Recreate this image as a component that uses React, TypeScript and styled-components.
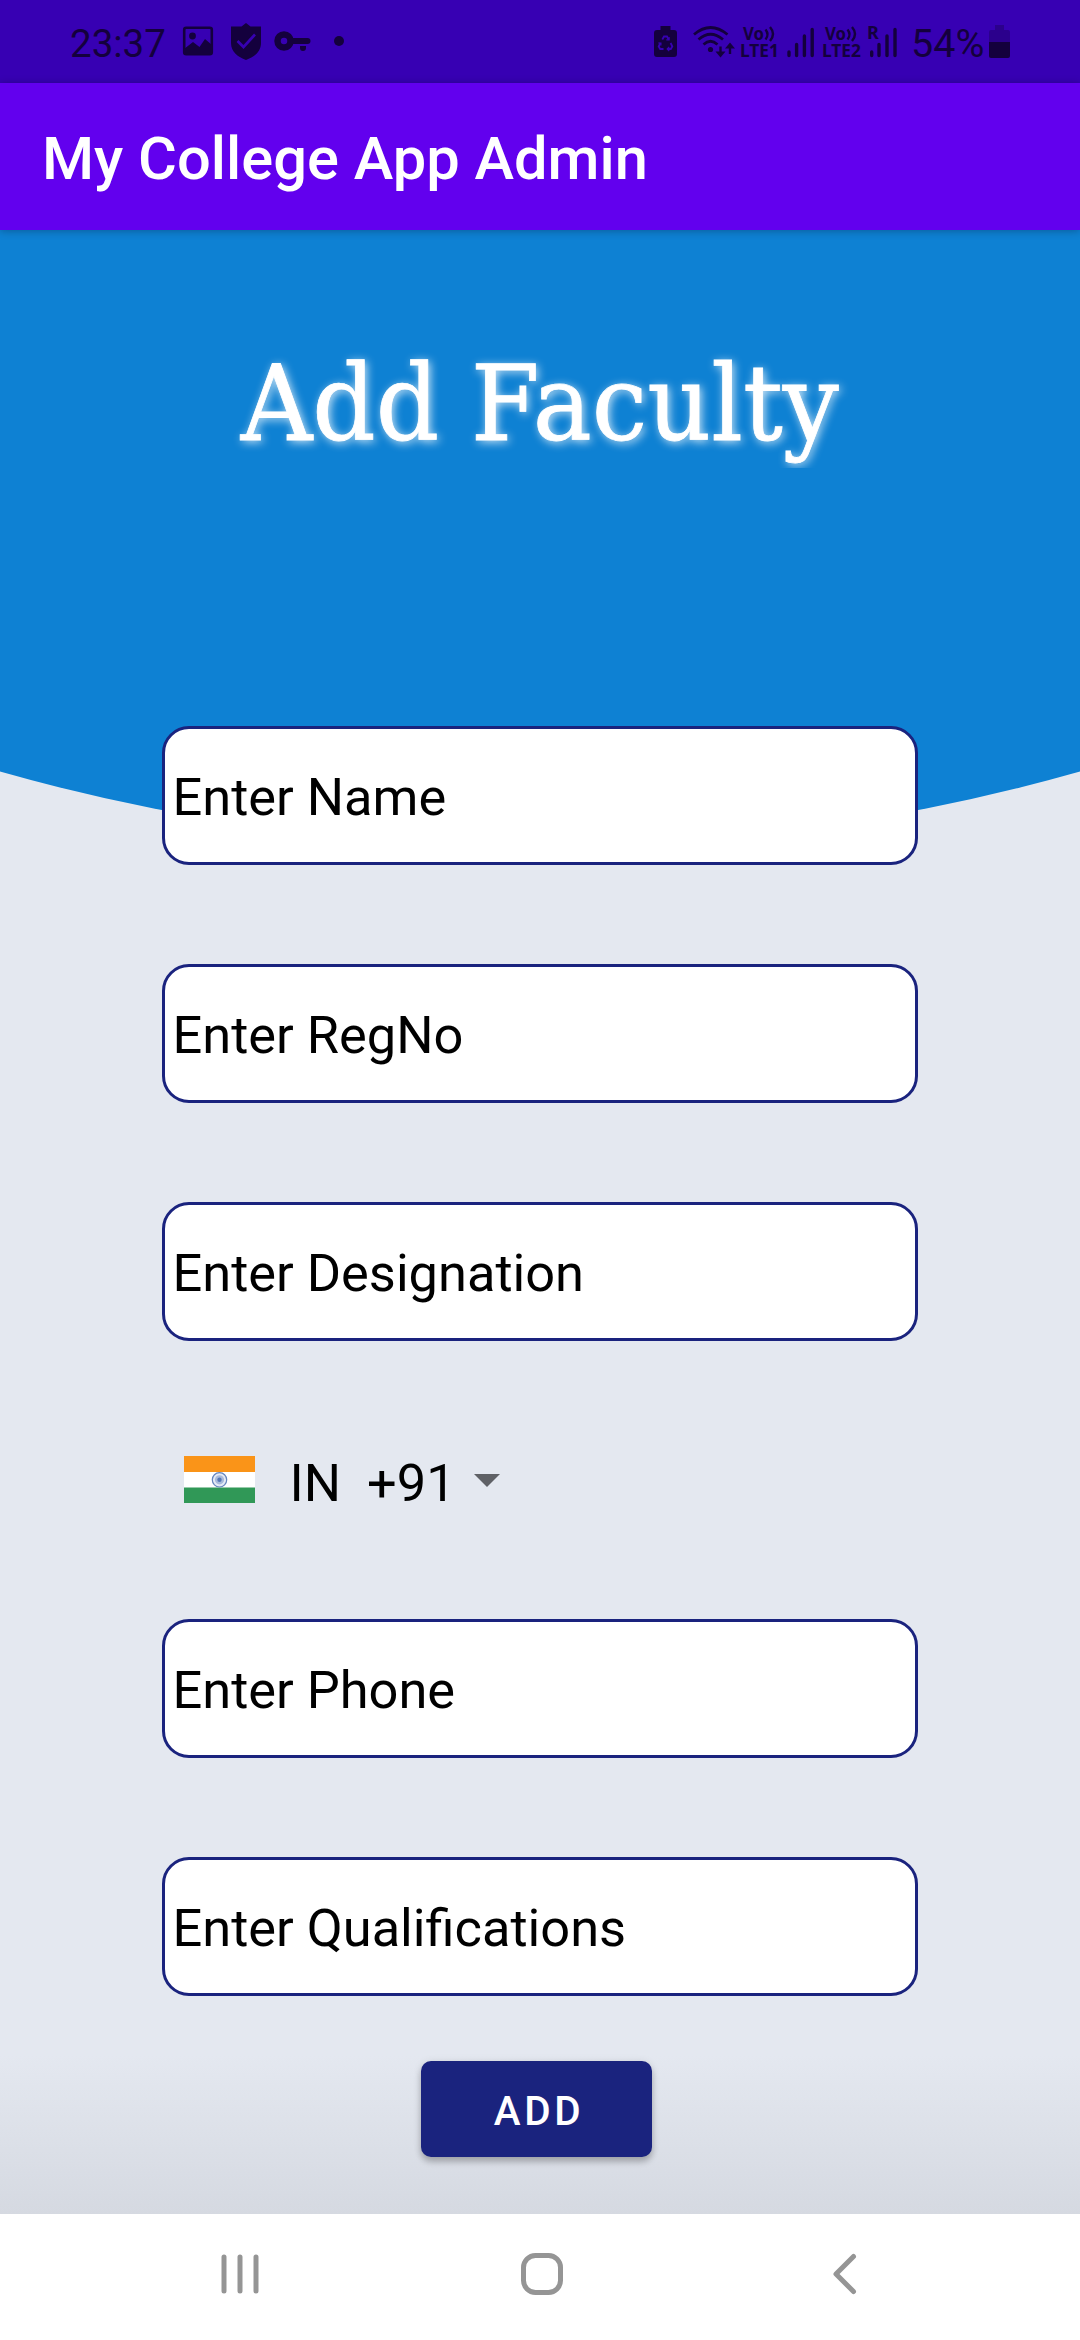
import React from 'react';
import styled, { createGlobalStyle } from 'styled-components';

const INK = '#14003d';

const GlobalStyle = createGlobalStyle`
  *, *::before, *::after { box-sizing: border-box; }
  html, body { margin: 0; padding: 0; }
  body { font-family: Roboto, 'Liberation Sans', sans-serif; }
`;

const Screen = styled.div`
  width: 1080px;
  height: 2340px;
  display: flex;
  flex-direction: column;
  overflow: hidden;
  background: #e4e8f0;
`;

const StatusBar = styled.header`
  height: 83px;
  flex: none;
  display: flex;
  justify-content: space-between;
  padding: 0 70px;
  background: #3700b3;
  color: ${INK};
`;

const StatusGroup = styled.div`
  display: flex;
  align-items: center;
  height: 83px;
`;

const StatusText = styled.span<{ $width: number; $size: number; $indent?: number }>`
  width: ${p => p.$width}px;
  padding: 4px 0 0 ${p => p.$indent ?? 0}px;
  font-size: ${p => p.$size}px;
  line-height: 46px;
  white-space: nowrap;
`;

const StatusIcon = styled.svg<{ $gap?: number }>`
  display: block;
  flex: none;
  height: 83px;
  margin-left: ${p => p.$gap ?? 0}px;
  overflow: visible;
`;

const AppBar = styled.div`
  height: 147px;
  flex: none;
  display: flex;
  align-items: center;
  padding: 4px 42px 0;
  background: #6200ee;
  box-shadow: 0 1px 8px rgba(0, 0, 0, 0.28);
  position: relative;
  z-index: 1;
`;

const AppTitle = styled.h1`
  margin: 0;
  color: #fff;
  font-size: 59.6px;
  font-weight: 500;
  line-height: 70px;
  white-space: nowrap;
`;

const Content = styled.main`
  position: relative;
  height: 1984px;
  flex: none;
  display: flex;
  flex-direction: column;
  background: linear-gradient(to bottom, #e4e8f0 0, #e4e8f0 1825px, #d5d9e1 1984px);
`;

const Backdrop = styled.div`
  position: absolute;
  inset: 0;
  background: #0e81d3;
  clip-path: circle(1980px at 540px -1363.5px);
`;

const Heading = styled.h2`
  position: relative;
  margin: 102px 0 0;
  height: 136px;
  overflow: hidden;
  text-align: center;
  color: #fff;
  font-family: 'DejaVu Serif', serif;
  font-weight: 400;
  font-size: 104px;
  line-height: 144px;
  -webkit-text-stroke: 0.8px #fff;
  text-shadow: 2px 2px 10px rgba(255, 255, 255, 0.85);
  white-space: nowrap;
`;

const HeadingText = styled.span`
  display: inline-block;
  transform: scaleX(0.953);
`;

const Form = styled.form`
  position: relative;
  display: flex;
  flex-direction: column;
  width: 756px;
  margin: 258px 0 0 162px;
`;

const Field = styled.input`
  width: 756px;
  height: 139px;
  margin: 0 0 99px;
  padding: 3px 7.5px 0;
  border: 3px solid #1a237e;
  border-radius: 27px;
  outline: none;
  background: #fff;
  font-family: Roboto, 'Liberation Sans', sans-serif;
  font-size: 52.35px;
  color: #000;
  &::placeholder { color: #000; opacity: 1; }
`;

const CountryPicker = styled.div`
  display: flex;
  align-items: center;
  height: 80px;
  margin: 0 0 99px;
  padding-left: 22px;
`;

const Flag = styled.svg`
  display: block;
  margin-bottom: 1px;
`;

const CountryCode = styled.span`
  margin: 5px 0 0 34.5px;
  width: 184.5px;
  font-size: 52.35px;
  line-height: 60px;
  white-space: pre;
`;

const AddButton = styled.button`
  width: 231px;
  height: 96px;
  margin: -34px 0 0 259px;
  padding: 4px 0 0 5px;
  border: 0;
  border-radius: 10px;
  background: #1a237e;
  color: #fff;
  font-family: Roboto, 'Liberation Sans', sans-serif;
  font-size: 40.4px;
  font-weight: 500;
  letter-spacing: 3.6px;
  box-shadow: 0 5px 6px rgba(0, 0, 0, 0.22), 0 1px 8px rgba(0, 0, 0, 0.1);
`;

const NavBar = styled.nav`
  flex: 1;
  display: flex;
  justify-content: space-between;
  align-items: center;
  padding: 0 220px 6px;
  background: #fff;
`;

const NavIcon = styled.svg<{ $nudge?: number }>`
  display: block;
  margin-right: ${p => p.$nudge ?? 0}px;
  fill: none;
  stroke: #959595;
  stroke-width: 5;
  stroke-linecap: round;
  stroke-linejoin: round;
`;

const Carrier = ({ digit, gap }: { digit: string; gap: number }) => (
  <StatusIcon $gap={gap} width="40" height="83" viewBox="0 0 40 83" fill={INK}>
    <g fontFamily="Noto Sans, Open Sans, sans-serif" fontWeight="700">
      <text x="3" y="40" fontSize="17.5" textLength="21" lengthAdjust="spacingAndGlyphs">Vo</text>
      <text x="0" y="57" fontSize="17.5" textLength="39" lengthAdjust="spacingAndGlyphs">{'LTE' + digit}</text>
    </g>
    <path d="M25.5 29.5q4 5 0 10M30 27q6 7 0 14" fill="none" stroke={INK} strokeWidth="2.4" />
  </StatusIcon>
);

const Bars = ({ roaming, gap }: { roaming?: boolean; gap: number }) => (
  <StatusIcon $gap={gap} width="28" height="83" viewBox="0 0 28 83" fill={INK}>
    <path
      d={roaming ? 'M3.7 52v3.5M11 44.500v11M19 36v19.500M27 29.500v26' : 'M2 52v3.500M9.600 44.500v11M17.400 36v19.500M25.200 29.500v26'}
      stroke={INK} strokeWidth="3.4" strokeLinecap="round"
    />
    {roaming && <text x="-1" y="39" fontFamily="Noto Sans, sans-serif" fontWeight="700" fontSize="18">R</text>}
  </StatusIcon>
);

const fieldsBefore = ['Enter Name', 'Enter RegNo', 'Enter Designation'];
const fieldsAfter = ['Enter Phone', 'Enter Qualifications'];

export default function App() {
  return (
    <Screen>
      <GlobalStyle />
      <StatusBar>
        <StatusGroup>
          <StatusText $width={112} $size={38.5}>23:37</StatusText>
          <StatusIcon width="32" height="83" viewBox="0 0 32 83">
            <rect x="2.2" y="27.7" width="27.6" height="26.6" rx="2" fill="none" stroke={INK} strokeWidth="2.6" />
            <circle cx="10.5" cy="36" r="3.4" fill={INK} />
            <path d="M2 49l9-7 6.500 5L23 39l7 6v9.500H2z" fill={INK} />
          </StatusIcon>
          <StatusIcon $gap={17} width="30" height="83" viewBox="0 0 30 83">
            <path d="M15 23l4.500 3.500H30V43c0 9-7 14-15 17C7 57 0 52 0 43V26.500h10.500z" fill={INK} />
            <path d="M6.500 41l6 6L24 34.500" fill="none" stroke="#3700b3" strokeWidth="2.600" />
          </StatusIcon>
          <StatusIcon $gap={13} width="37" height="83" viewBox="0 0 37 83">
            <circle cx="10" cy="41" r="6.500" fill="none" stroke={INK} strokeWidth="6.500" />
            <path d="M18 38h15.500a3 3 0 0 1 0 6H18zM26 46h6v2a3 3 0 0 1-6 0z" fill={INK} />
          </StatusIcon>
          <StatusIcon $gap={23} width="10" height="83" viewBox="0 0 10 83">
            <circle cx="5" cy="41" r="5" fill={INK} />
          </StatusIcon>
        </StatusGroup>
        <StatusGroup>
          <StatusIcon width="23" height="83" viewBox="0 0 23 83">
            <path d="M6.500 26h10v4H20q3 0 3 3v21q0 3-3 3H3q-3 0-3-3V33q0-3 3-3h3.500z" fill={INK} />
            <g fill="none" stroke="#3700b3" strokeWidth="1.800">
              <path d="M8.300 39.500l1.700-3h3l1.700 3M16.600 43l1.700 3.500-1.500 2.500h-3.300M9.500 49H6.200l-1.500-2.500L6.400 43" />
              <path d="M12.300 39.800h2.800v-2.800M15.200 47L13.200 49l2 2M4.200 43h2.700v2.600" strokeWidth="1.200" />
            </g>
          </StatusIcon>
          <StatusIcon $gap={16} width="42" height="83" viewBox="0 0 42 83">
            <g fill="none" stroke={INK} strokeWidth="2.800">
              <path d="M1 34.500Q17.500 20.500 34.500 34.500M5.500 39.500Q17.500 29 30 39.500M10.500 44.500q7-6.500 14 0" />
              <path d="M27.500 46.500v8M37 54v-8" strokeWidth="2.400" />
            </g>
            <circle cx="17.500" cy="49.500" r="2.600" fill={INK} />
            <path d="M22.500 51.500h10l-5 6zM32 48.500h10l-5-6z" fill={INK} />
          </StatusIcon>
          <Carrier digit="1" gap={5} />
          <Bars gap={7} />
          <Carrier digit="2" gap={7} />
          <Bars roaming gap={6} />
          <StatusText $width={79} $size={39.5} $indent={15}>54%</StatusText>
          <StatusIcon $gap={14} width="21" height="83" viewBox="0 0 21 83">
            <path d="M6 25h9v5h4q2 0 2 2v10H0V32q0-2 2-2h4z" fill="#2b008c" />
            <path d="M0 42h21v14q0 2-2 2H2q-2 0-2-2z" fill={INK} />
          </StatusIcon>
        </StatusGroup>
      </StatusBar>
      <AppBar>
        <AppTitle>My College App Admin</AppTitle>
      </AppBar>
      <Content>
        <Backdrop />
        <Heading><HeadingText>Add Faculty</HeadingText></Heading>
        <Form onSubmit={e => e.preventDefault()}>
          {fieldsBefore.map(label => <Field key={label} placeholder={label} />)}
          <CountryPicker>
            <Flag width="71" height="47" viewBox="0 0 71 47">
              <path d="M0 0h71v16H0z" fill="#fa9418" />
              <path d="M0 16h71v16H0z" fill="#fff" />
              <path d="M0 31.500h71V47H0z" fill="#309857" />
              <circle cx="35.500" cy="23.800" r="7.200" fill="#e4eaf5" stroke="#6484bd" strokeWidth="1.200" />
              <circle cx="35.500" cy="23.800" r="4.600" fill="#a9bbdc" />
              <circle cx="35.500" cy="23.800" r="2.200" fill="#5576b6" />
            </Flag>
            <CountryCode>{'IN  +91'}</CountryCode>
            <svg width="26" height="13" viewBox="0 0 26 13"><path d="M0 0h26L13 13z" fill="#5f6166" /></svg>
          </CountryPicker>
          {fieldsAfter.map(label => <Field key={label} placeholder={label} />)}
          <AddButton>ADD</AddButton>
        </Form>
      </Content>
      <NavBar>
        <NavIcon width="40" height="42" viewBox="0 0 40 42"><path d="M4 4v34M20 4v34M36 4v34" /></NavIcon>
        <NavIcon $nudge={6} width="42" height="42" viewBox="0 0 42 42"><rect x="2.500" y="2.500" width="37" height="37" rx="12" /></NavIcon>
        <NavIcon width="30" height="42" viewBox="0 0 30 42"><path d="M23.500 3.500L6 21l17.500 17.500" /></NavIcon>
      </NavBar>
    </Screen>
  );
}
